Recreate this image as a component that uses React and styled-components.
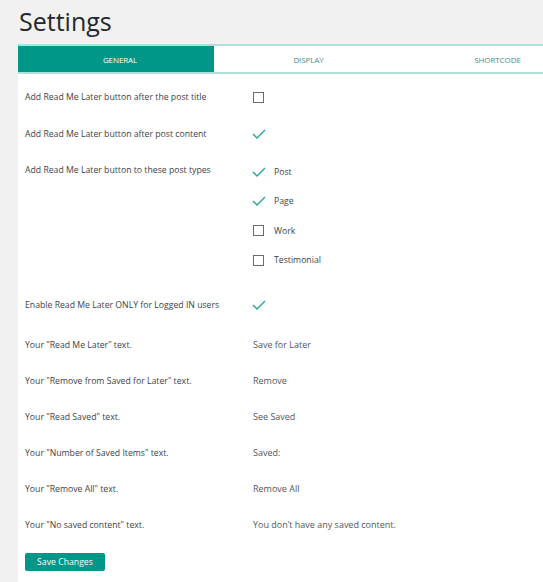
import React from "react";
import styled, { createGlobalStyle } from "styled-components";

const GlobalStyle = createGlobalStyle`
  body {
    margin: 0;
    background: #f1f1f1;
    font-family: "Open Sans", "Noto Sans", sans-serif;
    overflow: hidden;
  }
`;

const TEAL = "#009688";

const tabs = ["General", "Display", "Shortcode"];

const rows = [
  { label: "Add Read Me Later button after the post title", type: "checkbox", checked: false },
  { label: "Add Read Me Later button after post content", type: "checkbox", checked: true },
  {
    label: "Add Read Me Later button to these post types",
    type: "options",
    options: [
      { name: "Post", checked: true },
      { name: "Page", checked: true },
      { name: "Work", checked: false },
      { name: "Testimonial", checked: false },
    ],
  },
  { label: "Enable Read Me Later ONLY for Logged IN users", type: "checkbox", checked: true, tall: true },
  { label: 'Your "Read Me Later" text.', type: "text", value: "Save for Later" },
  { label: 'Your "Remove from Saved for Later" text.', type: "text", value: "Remove" },
  { label: 'Your "Read Saved" text.', type: "text", value: "See Saved" },
  { label: 'Your "Number of Saved Items" text.', type: "text", value: "Saved:" },
  { label: 'Your "Remove All" text.', type: "text", value: "Remove All" },
  { label: 'Your "No saved content" text.', type: "text", value: "You don’t have any saved content." },
];

const Check = ({ checked }) => (
  <CheckSlot>
    {checked ? (
      <CheckMark viewBox="0 0 14 10">
        <polyline points="1,5 5,9 13,1" />
      </CheckMark>
    ) : (
      <Box />
    )}
  </CheckSlot>
);

export default function App() {
  return (
    <>
      <GlobalStyle />
      <Page>
        <Title>Settings</Title>
        <Panel>
          <TabBar>
            {tabs.map((t, i) => (
              <Tab key={t} $active={i === 0}>
                {t}
              </Tab>
            ))}
          </TabBar>
          <Form>
            {rows.map((row) => (
              <Row key={row.label} $tall={row.tall}>
                <Label>{row.label}</Label>
                {row.type === "checkbox" && (
                  <Control>
                    <Check checked={row.checked} />
                  </Control>
                )}
                {row.type === "options" && (
                  <Options>
                    {row.options.map((o) => (
                      <Option key={o.name}>
                        <Check checked={o.checked} />
                        <span>{o.name}</span>
                      </Option>
                    ))}
                  </Options>
                )}
                {row.type === "text" && <Value>{row.value}</Value>}
              </Row>
            ))}
            <SaveButton>Save Changes</SaveButton>
          </Form>
        </Panel>
      </Page>
    </>
  );
}

const Page = styled.div`
  padding-left: 18px;
`;

const Title = styled.h1`
  margin: 0;
  padding: 4px 0 6px 1px;
  font-size: 25px;
  line-height: 34px;
  font-weight: 400;
  color: #23282d;
`;

const Panel = styled.div`
  background: #fff;
  width: 580px;
  min-height: 540px;
`;

const TabBar = styled.div`
  display: flex;
  border-top: 2px solid #b2dfdb;
  border-bottom: 2px solid #b2dfdb;
`;

const Tab = styled.div`
  width: 189px;
  flex: none;
  box-sizing: border-box;
  height: 26px;
  display: flex;
  align-items: center;
  justify-content: center;
  font-size: 8px;
  text-transform: uppercase;
  letter-spacing: -0.1px;
  color: ${(p) => (p.$active ? "#fff" : "#4a8f88")};
  background: ${(p) => (p.$active ? TEAL : "transparent")};
  &:first-child {
    width: 196px;
    padding-left: 8px;
  }
`;

const Form = styled.div`
  padding: 5px 0 20px 7px;
`;

const Row = styled.div`
  display: grid;
  grid-template-columns: 228px 1fr;
  padding: 12px 0 ${(p) => (p.$tall ? "16px" : "12px")};
  &:first-child {
    padding-bottom: 13px;
  }
`;

const Label = styled.div`
  font-size: 8.7px;
  line-height: 12px;
  color: #3c434a;
`;

const Control = styled.div`
  height: 12px;
  display: flex;
  align-items: center;
`;

const CheckSlot = styled.span`
  display: flex;
  align-items: center;
  width: 11px;
  flex: none;
`;

const Box = styled.span`
  display: block;
  box-sizing: border-box;
  width: 11px;
  height: 11px;
  border: 1.5px solid #6b6b6b;
`;

const CheckMark = styled.svg`
  width: 14px;
  height: 10px;
  flex: none;
  margin-left: -1px;
  fill: none;
  stroke: #26a69a;
  stroke-width: 1.4;
`;

const Options = styled.div`
  display: flex;
  flex-direction: column;
  margin-top: -7px;
`;

const Option = styled.div`
  height: 29.5px;
  display: flex;
  align-items: center;
  gap: 10px;
  font-size: 8.7px;
  color: #3c434a;
`;

const Value = styled.div`
  font-size: 9px;
  line-height: 12px;
  color: #50575e;
`;

const SaveButton = styled.button`
  margin-top: 10px;
  width: 80px;
  height: 18px;
  padding: 0;
  border: none;
  border-radius: 2px;
  background: ${TEAL};
  color: #fff;
  font-family: inherit;
  font-size: 8.7px;
`;
